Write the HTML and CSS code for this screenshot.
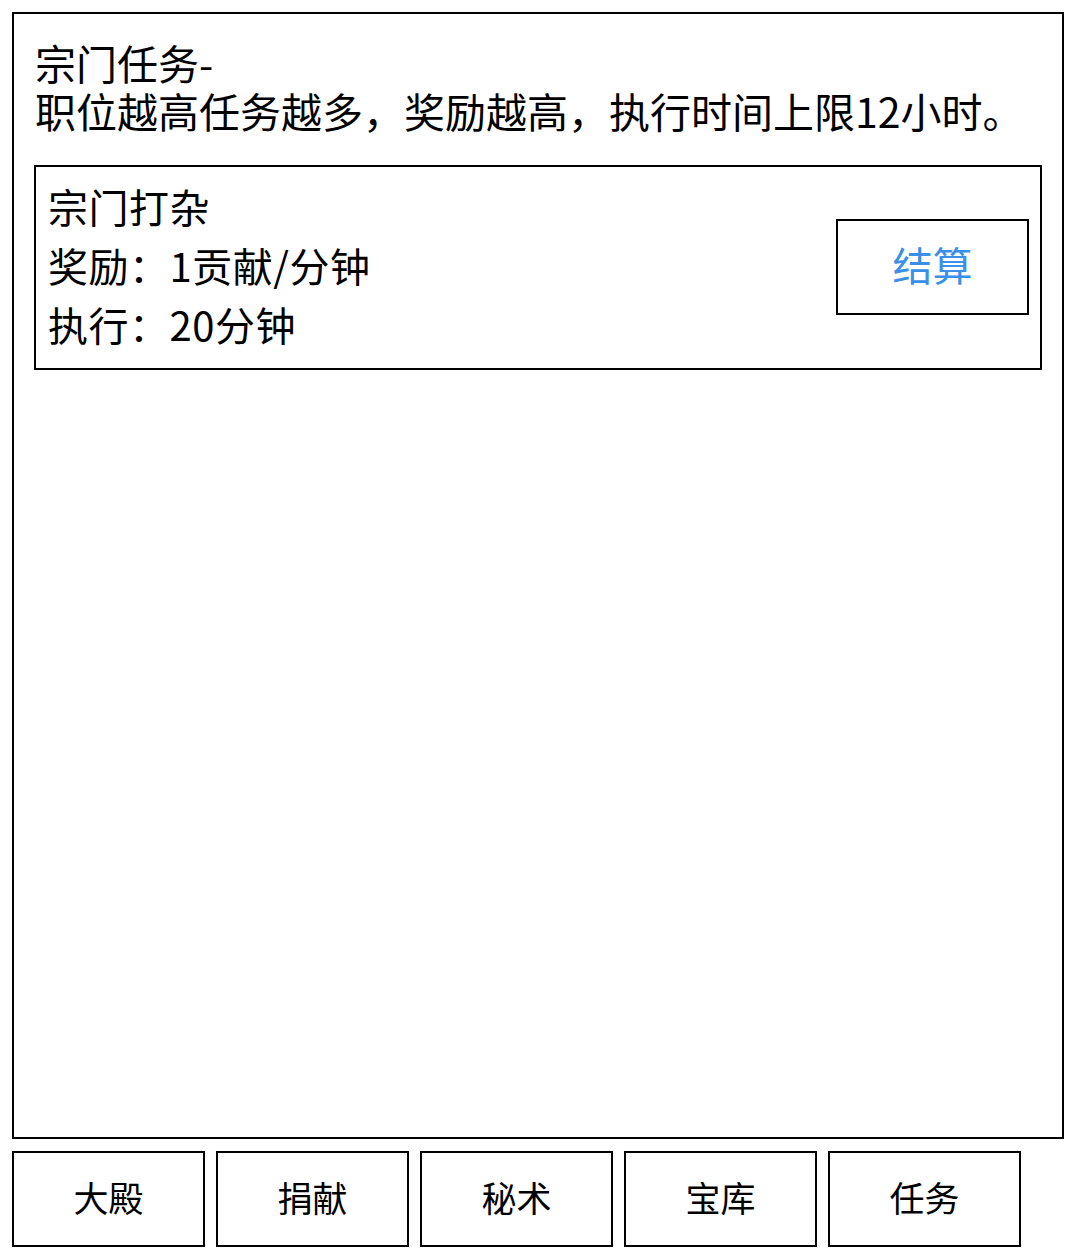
FILE: index.html
```html
<!DOCTYPE html>
<html lang="zh">
<head>
<meta charset="utf-8">
<title>宗门任务</title>
<link rel="stylesheet" href="styles.css">
</head>
<body>
<div class="page">
  <section class="panel">
    <div class="intro">
      <div>宗门任务-</div>
      <div>职位越高任务越多，奖励越高，执行时间上限12小时。</div>
    </div>
    <div class="task">
      <div class="task-info">
        <div>宗门打杂</div>
        <div>奖励：1贡献/分钟</div>
        <div>执行：20分钟</div>
      </div>
      <button class="btn btn-settle">结算</button>
    </div>
  </section>
  <nav class="tabs">
    <button class="btn tab">大殿</button>
    <button class="btn tab">捐献</button>
    <button class="btn tab">秘术</button>
    <button class="btn tab">宝库</button>
    <button class="btn tab">任务</button>
  </nav>
</div>
</body>
</html>
```

FILE: styles.css
```css
* { box-sizing: border-box; }
html, body { margin: 0; padding: 0; background: #fff; }
body {
  font-family: "Noto Sans CJK SC", "Noto Sans", sans-serif;
  color: #000;
}
.page {
  padding: 12px 0 0 12px;
  display: flex;
  flex-direction: column;
  gap: 12px;
}
.panel {
  width: 1052px;
  height: 1127px;
  border: 2px solid #000;
  padding: 24px 20px 20px 20px;
}
.intro {
  font-size: 41px;
  line-height: 48px;
  padding-left: 1px;
  margin-bottom: 31px;
}
.task {
  border: 2px solid #000;
  display: flex;
  align-items: center;
  justify-content: space-between;
  padding: 10px 11px 14px 12px;
}
.task-info {
  font-size: 40px;
  line-height: 59px;
  letter-spacing: 0.5px;
}
.btn {
  width: 193px;
  height: 96px;
  border: 2px solid #000;
  background: #fff;
  font-family: "Noto Sans CJK SC", "Noto Sans", sans-serif;
  padding: 0 0 5px 0;
  margin: 0;
  cursor: pointer;
}
.btn-settle {
  font-size: 40px;
  color: #3a8fe8;
  margin-top: 2px;
}
.tabs {
  display: flex;
  gap: 11px;
}
.tab {
  font-size: 35px;
  color: #000;
}
```
